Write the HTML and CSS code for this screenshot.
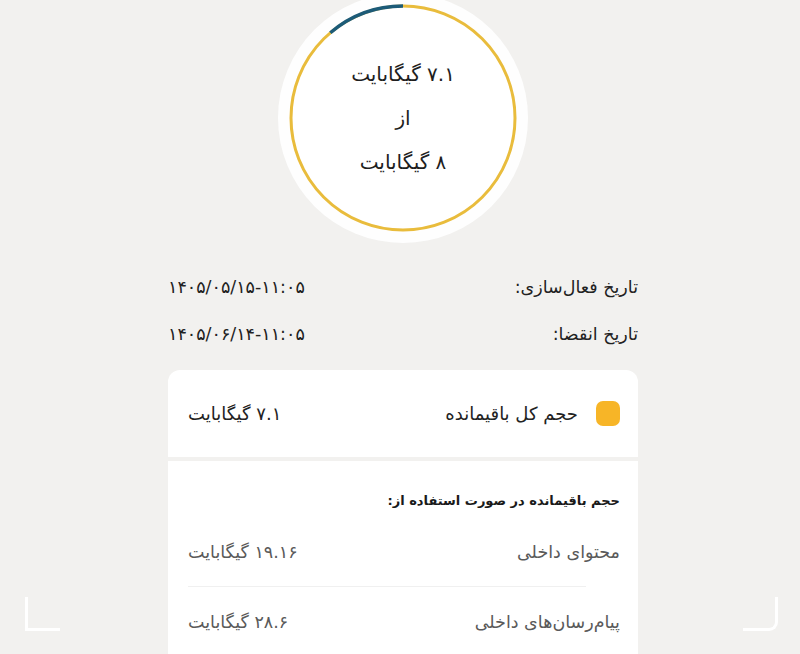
FILE: index.html
```html
<!DOCTYPE html>
<html lang="fa" dir="rtl">
<head>
  <meta charset="UTF-8">
  <meta name="viewport" content="width=device-width, initial-scale=1.0">
  <title>حجم بسته</title>
  <link rel="stylesheet" href="styles.css">
</head>
<body>

  <div class="page">
    <!-- Usage ring -->
    <div class="usage">
      <svg class="usage-ring" width="250" height="250" viewBox="0 0 250 250">
        <circle cx="125" cy="125" r="125" fill="#fefefe"/>
        <circle cx="125" cy="125" r="112" fill="#ffffff" stroke="#e9bc3c" stroke-width="3"/>
        <circle cx="125" cy="125" r="112" fill="none" stroke="#1c5b78" stroke-width="3.5"
                stroke-dasharray="79 704" transform="rotate(-90 125 125) scale(1 -1) translate(0 -250)"/>
      </svg>
      <div class="usage-text">
        <div>۷.۱ گیگابایت</div>
        <div>از</div>
        <div>۸ گیگابایت</div>
      </div>
    </div>

    <!-- Dates -->
    <div class="dates">
      <div class="date-row">
        <span class="date-label">تاریخ فعال‌سازی:</span>
        <span class="date-value" dir="ltr">۱۴۰۵/۰۵/۱۵-۱۱:۰۵</span>
      </div>
      <div class="date-row">
        <span class="date-label">تاریخ انقضا:</span>
        <span class="date-value" dir="ltr">۱۴۰۵/۰۶/۱۴-۱۱:۰۵</span>
      </div>
    </div>

    <!-- Total remaining -->
    <div class="card card-top">
      <div class="total-row">
        <span class="dot"></span>
        <span class="total-label">حجم کل باقیمانده</span>
        <span class="total-value">۷.۱ گیگابایت</span>
      </div>
    </div>

    <!-- Remaining per service -->
    <div class="card card-bottom">
      <div class="card-title">حجم باقیمانده در صورت استفاده از:</div>
      <div class="item-row">
        <span>محتوای داخلی</span>
        <span>۱۹.۱۶ گیگابایت</span>
      </div>
      <div class="divider"></div>
      <div class="item-row">
        <span>پیام‌رسان‌های داخلی</span>
        <span>۲۸.۶ گیگابایت</span>
      </div>
    </div>
  </div>

  <!-- scan frame corners -->
  <span class="corner corner-left"></span>
  <span class="corner corner-right"></span>

</body>
</html>
```

FILE: styles.css
```css
html, body {
  height: 100%;
}

body {
  margin: 0;
  font-family: "DejaVu Sans", sans-serif;
  background-color: #f2f1ef;
  color: #222;
  overflow: hidden;
  position: relative;
}

.page {
  width: 470px;
  margin-left: 168px;
  margin-right: 162px;
}

.usage {
  position: relative;
  width: 250px;
  height: 250px;
  margin: -7px auto 0;
}

.usage-ring {
  display: block;
}

.usage-text {
  position: absolute;
  inset: 0;
  display: flex;
  flex-direction: column;
  align-items: center;
  justify-content: center;
  gap: 20px;
  font-size: 20px;
  line-height: 24px;
  color: #1e1e1e;
}

.dates {
  margin-top: 32px;
  display: flex;
  flex-direction: column;
  gap: 23px;
}

.date-row {
  display: flex;
  justify-content: space-between;
  align-items: center;
  font-size: 17.5px;
  line-height: 24px;
  color: #222;
}

.card {
  background-color: #fff;
}

.card-top {
  margin-top: 24px;
  height: 87px;
  border-radius: 12px 12px 0 0;
  padding: 0 18px 0 20px;
  display: flex;
  align-items: center;
}

.card-bottom {
  margin-top: 4px;
  padding: 30px 18px 40px 20px;
}

.total-row {
  display: flex;
  align-items: center;
  width: 100%;
  font-size: 18px;
  line-height: 24px;
}

.dot {
  width: 24px;
  height: 25px;
  border-radius: 7px;
  background-color: #f7b527;
  margin-left: 18px;
}

.total-label {
  flex-grow: 1;
}

.card-title {
  font-size: 13px;
  font-weight: bold;
  line-height: 20px;
  color: #1a1a1a;
  margin-bottom: 29px;
}

.item-row {
  display: flex;
  justify-content: space-between;
  align-items: center;
  font-size: 17.5px;
  line-height: 24px;
  color: #5a5a5a;
}

.divider {
  height: 1px;
  background-color: #f0f0f0;
  margin: 22px 34px 23px 0;
}

.corner {
  position: absolute;
  top: 597px;
  width: 32px;
  height: 31px;
  border-bottom: 3px solid #fff;
}

.corner-left {
  left: 25px;
  border-left: 3px solid #fff;
}

.corner-right {
  left: 743px;
  border-right: 3px solid #fff;
  border-bottom-right-radius: 9px;
}
```
